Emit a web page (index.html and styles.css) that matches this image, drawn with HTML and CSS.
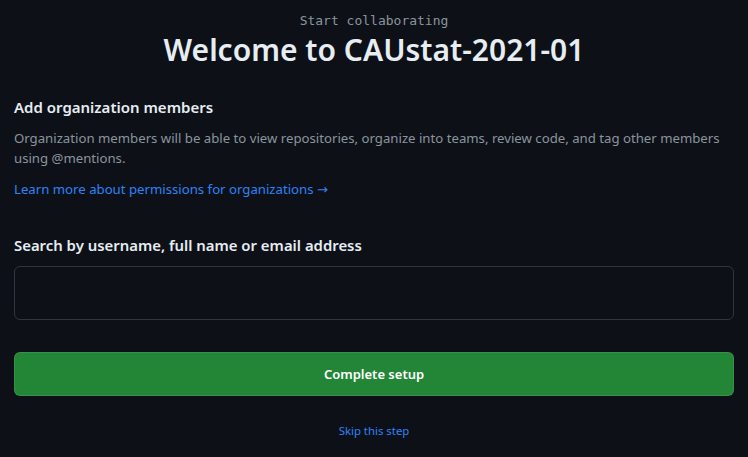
FILE: index.html
```html
<!DOCTYPE html>
<html lang="en">
<head>
<meta charset="utf-8">
<link rel="stylesheet" href="styles.css">
</head>
<body>
<main class="page">
  <header class="hero">
    <p class="eyebrow">Start collaborating</p>
    <h1 class="title">Welcome to CAUstat-2021-01</h1>
  </header>
  <section class="members">
    <h2 class="section-title">Add organization members</h2>
    <p class="desc">Organization members will be able to view repositories, organize into teams, review code, and tag other members using @mentions.</p>
    <a class="link" href="#">Learn more about permissions for organizations <span class="arrow">→</span></a>
  </section>
  <form class="search">
    <label class="search-label" for="q">Search by username, full name or email address</label>
    <input class="search-input" id="q" type="text">
    <button class="btn-primary" type="button">Complete setup</button>
    <a class="skip" href="#">Skip this step</a>
  </form>
</main>
</body>
</html>
```
FILE: styles.css
```css
html, body {
  margin: 0;
  padding: 0;
  background: #0d1117;
}
body {
  font-family: "Noto Sans", "Open Sans", sans-serif;
  color: #e6edf3;
}
.page {
  width: 720px;
  margin: 0 auto;
  padding-top: 12px;
}
.hero {
  text-align: center;
}
.eyebrow {
  margin: 0;
  font-family: "DejaVu Sans Mono", "Liberation Mono", monospace;
  font-size: 13px;
  line-height: 18px;
  color: #8b949e;
}
.title {
  margin: 0;
  font-size: 30px;
  line-height: 40px;
  font-weight: 600;
  color: #e6edf3;
}
.members {
  margin-top: 25px;
}
.section-title {
  margin: 0;
  font-size: 15px;
  line-height: 24px;
  font-weight: 600;
}
.desc {
  margin: 9px 0 0;
  font-size: 13.2px;
  line-height: 20px;
  color: #8b949e;
}
.link {
  display: inline-block;
  margin-top: 11px;
  font-size: 13.2px;
  line-height: 20px;
  color: #2f81f7;
  text-decoration: none;
}
.arrow {
  font-family: "DejaVu Sans", sans-serif;
  font-size: 13px;
}
.search {
  margin-top: 33px;
  display: flex;
  flex-direction: column;
}
.search-label {
  font-size: 14.9px;
  line-height: 24px;
  font-weight: 600;
}
.search-input {
  margin-top: 9px;
  height: 54px;
  box-sizing: border-box;
  border: 1px solid #30363d;
  border-radius: 6px;
  background: #0d1117;
  color: #e6edf3;
  font-size: 16px;
  padding: 0 12px;
}
.btn-primary {
  margin-top: 32px;
  height: 44px;
  border: 1px solid rgba(240,246,252,0.1);
  border-radius: 6px;
  background: #238636;
  color: #ffffff;
  font-family: inherit;
  font-size: 13px;
  font-weight: 600;
}
.skip {
  margin-top: 26px;
  align-self: center;
  font-size: 11.4px;
  line-height: 18px;
  color: #2f81f7;
  text-decoration: none;
}
```
